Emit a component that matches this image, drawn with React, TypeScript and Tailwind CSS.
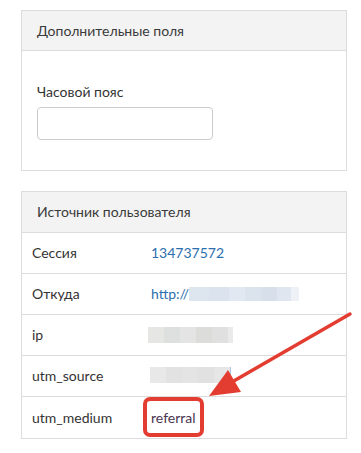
import React from "react";

const Row = ({ label, children, last }: { label: string; children: React.ReactNode; last?: boolean }) => (
  <div className={`flex h-[41px] items-center ${last ? "" : "border-b border-[#dcdcdc]"}`}>
    <div className="w-[129px] pl-[10px] text-[#333]">{label}</div>
    <div className="flex items-center">{children}</div>
  </div>
);

export default function App() {
  return (
    <div
      className="relative h-[453px] w-[361px] bg-white pl-[21px] pt-[10px] text-[14px] leading-[20px]"
      style={{ fontFamily: "Lato, 'Open Sans', sans-serif" }}
    >
      <div className="w-[326px] border border-[#dcdcdc]">
        <div className="flex h-[40px] items-center border-b border-[#dcdcdc] bg-[#f3f3f3] px-[15px] text-[#3a3a3a]">
          Дополнительные поля
        </div>
        <div className="px-[15px] pb-[30px] pt-[31px]">
          <div className="mb-[5px] text-[#333]">Часовой пояс</div>
          <div className="h-[33px] w-[176px] rounded-[4px] border border-[#cccccc] bg-white" />
        </div>
      </div>

      <div className="mt-[20px] w-[326px] border border-[#dcdcdc]">
        <div className="flex h-[41px] items-center border-b border-[#dcdcdc] bg-[#f3f3f3] px-[15px] text-[#3a3a3a]">
          Источник пользователя
        </div>
        <Row label="Сессия">
          <span className="text-[#2c6fae]">134737572</span>
        </Row>
        <Row label="Откуда">
          <span className="text-[#2c6fae]">http://</span>
          <span className="flex h-[14px] w-[110px]">
            <span className="w-[20px] bg-[#dde6ef]" />
            <span className="w-[20px] bg-[#dbe4ee]" />
            <span className="w-[16px] bg-[#e1e8f1]" />
            <span className="w-[16px] bg-[#dbe3ec]" />
            <span className="w-[16px] bg-[#d6dfea]" />
            <span className="w-[14px] bg-[#dfe6ef]" />
            <span className="w-[8px] bg-[#eef2f6]" />
          </span>
        </Row>
        <Row label="ip">
          <span className="-ml-[3px] flex h-[16px] w-[85px]">
            <span className="w-[16px] bg-[#e6e6e4]" />
            <span className="w-[16px] bg-[#dedfdf]" />
            <span className="w-[16px] bg-[#e4e4e4]" />
            <span className="w-[16px] bg-[#dcdcda]" />
            <span className="w-[16px] bg-[#e0e0e0]" />
            <span className="w-[5px] bg-[#eaeaea]" />
          </span>
        </Row>
        <Row label="utm_source">
          <span className="-ml-[1px] flex h-[18px] w-[81px] items-start">
            <span className="h-[16px] w-[16px] bg-[#e8e8e8]" />
            <span className="h-[16px] w-[16px] bg-[#e2e2e2]" />
            <span className="h-[16px] w-[16px] bg-[#e4e4e4]" />
            <span className="h-[16px] w-[16px] bg-[#e1e1e1]" />
            <span className="h-[16px] w-[16px] bg-[#e6e6e6]" />
            <span className="h-[18px] w-[1px] bg-[#a9c8e8]" />
          </span>
        </Row>
        <Row label="utm_medium" last>
          <span className="text-[#4a3550]">referral</span>
        </Row>
      </div>

      <svg className="pointer-events-none absolute left-0 top-0" width="361" height="453" viewBox="0 0 361 453">
        <rect x="145" y="399" width="57" height="36" rx="5" fill="none" stroke="#e33c30" strokeWidth="4" />
        <line x1="350" y1="314" x2="232" y2="382" stroke="#e33c30" strokeWidth="3.5" strokeLinecap="round" />
        <polygon points="209,396 228,370 241,392" fill="#e33c30" />
      </svg>
    </div>
  );
}
